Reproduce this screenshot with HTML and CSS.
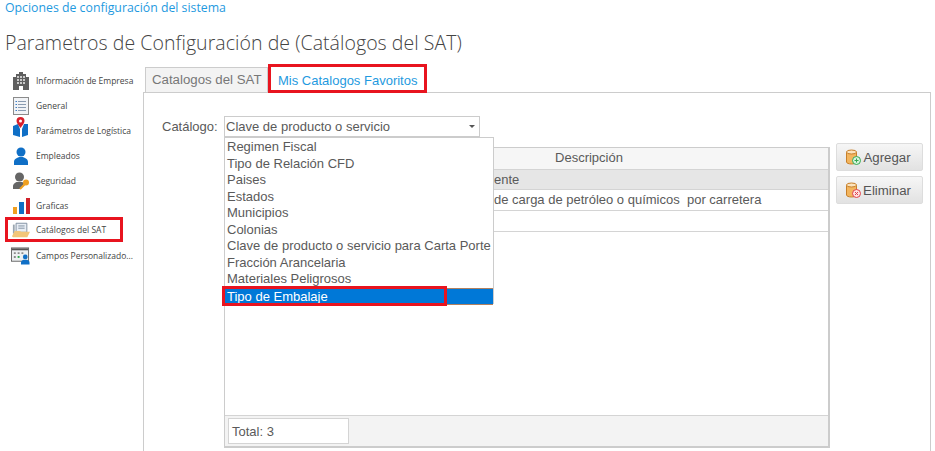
FILE: index.html
```html
<!DOCTYPE html>
<html lang="es">
<head>
  <meta charset="utf-8">
  <title>Parametros de Configuración</title>
  <link rel="stylesheet" href="styles.css">
</head>
<body>
  <header class="top">
    <a class="crumb" href="#">Opciones de configuración del sistema</a>
    <h1>Parametros de Configuración de (Catálogos del SAT)</h1>
  </header>
  <div class="layout">
    <nav class="side">
      <a class="item">
        <svg viewBox="0 0 18 18"><path fill="#5f5f5f" d="M1 5h3V2h3V0h4v2h3v3h3v13H11v-4H7v4H1z"/><path fill="#c9c9c9" d="M5 4h2v2H5zm3 0h2v2H8zm3 0h2v2h-2zM5 7h2v2H5zm3 0h2v2H8zm3 0h2v2h-2zM5 10h2v2H5zm3 0h2v2H8zm3 0h2v2h-2z"/></svg>
        <span>Información de Empresa</span>
      </a>
      <a class="item">
        <svg viewBox="0 0 18 18"><rect x="1.5" y="0.5" width="15" height="17" fill="#f1f3f6" stroke="#8b8b8b"/><path stroke="#8a9bb0" d="M6 4.500h8M6 7.500h8M6 10.500h8M6 13.500h8"/><path stroke="#3f7fc4" d="M3.500 4.500h1.500M3.500 7.500h1.500M3.500 10.500h1.500M3.500 13.500h1.500"/></svg>
        <span>General</span>
      </a>
      <a class="item">
        <svg class="map" viewBox="0 0 18 22"><path fill="#0f6fc6" d="M1 9l5-2 2 5v8l-7-2zM16 7v11l-6 2v-8l2-5z"/><path fill="#d8202c" d="M8.500 0a4 4 0 0 1 4 4c0 2-2 4-4 7-2-3-4-5-4-7a4 4 0 0 1 4-4z"/><circle cx="8.500" cy="4" r="1.500" fill="#fff"/></svg>
        <span>Parámetros de Logística</span>
      </a>
      <a class="item">
        <svg viewBox="0 0 18 18"><circle cx="9" cy="5" r="4.500" fill="#0f6fc6"/><path fill="#0f6fc6" d="M2 18v-3c0-3 3-4 5-5h4c2 1 5 2 5 5v3z"/></svg>
        <span>Empleados</span>
      </a>
      <a class="item">
        <svg viewBox="0 0 18 18"><circle cx="7.500" cy="5" r="4.500" fill="#666"/><path fill="#666" d="M1 17v-3c0-2 3-4 4-4h5c1 0 2 1 2 2l-4 5z"/><circle cx="14" cy="10.500" r="3" fill="#f0a020"/><path stroke="#f0a020" stroke-width="2" d="M12.500 12.500L8 17"/></svg>
        <span>Seguridad</span>
      </a>
      <a class="item">
        <svg viewBox="0 0 18 18"><path fill="#f0a020" d="M1 10h4v7H1z"/><path fill="#0f6fc6" d="M7 5h5v12H7z"/><path fill="#d0212a" d="M14 1h4v16h-4z"/></svg>
        <span>Graficas</span>
      </a>
      <a class="item marked">
        <svg viewBox="0 0 20 18"><path fill="#e8eef5" stroke="#7b8a9c" d="M4.500 1.500h12v10h-12z"/><path stroke="#7b8a9c" d="M7 4.500h7M7 7h7"/><path fill="#9aa5b0" d="M1 3h2v10H1z"/><path fill="#f2c679" d="M0 16l3-6h6l1 1h10l-3 6H1z"/></svg>
        <span>Catálogos del SAT</span>
      </a>
      <a class="item">
        <svg class="wide" viewBox="0 0 20 18"><rect x="0.500" y="0.500" width="18" height="14" fill="#eef0f2" stroke="#666"/><path fill="#555" d="M1 1h17v2H1z"/><path fill="#8a8a8a" d="M3 5h2v2H3zm4 0h2v2H7zm4 0h2v2h-2zm-8 4h2v2H3z"/><path fill="#2ea84a" d="M7 9h2v2H7z"/><circle cx="15" cy="10" r="2.500" fill="#0f6fc6"/><path fill="#0f6fc6" d="M10.500 18v-2c0-2 2-3 3-3h3c1 0 3 1 3 3v2z"/></svg>
        <span>Campos Personalizado...</span>
      </a>
    </nav>
    <main class="main">
      <div class="tabs">
        <a class="tab tab-on">Catalogos del SAT</a>
        <a class="tab tab-fav">Mis Catalogos Favoritos</a>
      </div>
      <div class="panel">
        <div class="field">
          <label>Catálogo:</label>
          <div class="combo">
            <div class="select">Clave de producto o servicio<i class="caret"></i></div>
            <ul class="drop">
              <li>Regimen Fiscal</li>
              <li>Tipo de Relación CFD</li>
              <li>Paises</li>
              <li>Estados</li>
              <li>Municipios</li>
              <li>Colonias</li>
              <li>Clave de producto o servicio para Carta Porte</li>
              <li>Fracción Arancelaria</li>
              <li>Materiales Peligrosos</li>
              <li class="sel">Tipo de Embalaje<b class="mark"></b></li>
            </ul>
          </div>
        </div>
        <div class="work">
          <div class="grid">
            <div class="row head"><div class="c1"></div><div class="c2">Descripción</div></div>
            <div class="row alt"><div class="c1"></div><div class="c2 clip">ente</div></div>
            <div class="row"><div class="c1"></div><div class="c2 clip">de carga de petróleo o químicos&nbsp; por carretera</div></div>
            <div class="row"><div class="c1"></div><div class="c2"></div></div>
            <div class="blank"></div>
            <div class="foot"><div class="total">Total: 3</div></div>
          </div>
          <div class="btns">
            <button>
              <svg viewBox="0 0 16 16"><path fill="#f3b55e" stroke="#c77f2a" d="M1.500 3v10c0 1 2 2 5 2s5-1 5-2V3z"/><ellipse cx="6.500" cy="3" rx="5" ry="2" fill="#fbe3bd" stroke="#c77f2a"/><circle cx="11.500" cy="11.500" r="4" fill="#d6f3dc" stroke="#35a853"/><path stroke="#35a853" d="M9.500 11.500h4M11.500 9.500v4"/></svg>
              Agregar
            </button>
            <button>
              <svg viewBox="0 0 16 16"><path fill="#f3b55e" stroke="#c77f2a" d="M1.500 3v10c0 1 2 2 5 2s5-1 5-2V3z"/><ellipse cx="6.500" cy="3" rx="5" ry="2" fill="#fbe3bd" stroke="#c77f2a"/><circle cx="11.500" cy="11.500" r="4" fill="#fde0e0" stroke="#e0404a"/><path stroke="#e0404a" d="M10 10l3 3M13 10l-3 3"/></svg>
              Eliminar
            </button>
          </div>
        </div>
      </div>
    </main>
  </div>
</body>
</html>
```

FILE: styles.css
```css
html,body{
  height: 100%;
  margin: 0;
  padding: 0;
  overflow: hidden;
  background: #fff;
  color: #5a5a5a;
  font-family: "Liberation Sans", Arial, sans-serif;
  font-size: 13px;
}
a{
  text-decoration: none;
}
.top{
  height: 65px;
  padding-left: 5px;
}
.crumb{
  display: block;
  line-height: 15px;
  font-family: "Open Sans", sans-serif;
  font-size: 12.300px;
  color: #1f9ae0;
}
.top h1{
  margin: 14px 0 0;
  font-family: "Open Sans", sans-serif;
  font-size: 19.500px;
  line-height: 28px;
  font-weight: 300;
  letter-spacing: 0.05px;
  color: #444;
}
.layout{
  display: flex;
  height: 386px;
}
.side{
  width: 143px;
  padding-top: 3px;
  flex: none;
}
.item{
  display: flex;
  align-items: center;
  height: 25px;
  padding-left: 12px;
  color: #444;
  font-family: "Open Sans", sans-serif;
  font-size: 8.500px;
  white-space: nowrap;
}
.item svg{
  width: 18px;
  height: 18px;
  margin-right: 6px;
  flex: none;
}
.item svg.map{
  height: 22px;
  margin-top: -6px;
}
.item svg.wide{
  margin-left: -1px;
  width: 19px;
}
.item.marked{
  margin: -1px 20px 1px 5px;
  padding-left: 7px;
  outline: 3px solid #e8141f;
  outline-offset: -3px;
}
.main{
  flex: 1;
  min-width: 0;
  margin-right: 4px;
}
.tabs{
  display: flex;
  height: 27px;
  padding-left: 2px;
  align-items: flex-end;
}
.tab{
  display: block;
  height: 25px;
  line-height: 24px;
  box-sizing: border-box;
  white-space: nowrap;
}
.tab-on{
  width: 123px;
  padding-left: 6px;
  background: #f3f3f3;
  border: 1px solid #ccc;
  border-bottom: 0;
  color: #777;
  font-size: 13.250px;
}
.tab-fav{
  position: relative;
  height: 29px;
  width: 159px;
  line-height: 27px;
  padding-left: 7px;
  border: 3px solid #e8141f;
  color: #1f9ae0;
  font-size: 13px;
  margin-bottom: -1px;
  background: #fff;
}
.panel{
  height: 359px;
  box-sizing: border-box;
  border: 1px solid #ccc;
  border-bottom: 0;
  padding: 23px 0 0 18px;
}
.field{
  display: flex;
  align-items: center;
  height: 21px;
}
.field label{
  width: 62px;
  font-size: 13px;
}
.combo{
  position: relative;
  width: 256px;
  height: 21px;
}
.select{
  height: 21px;
  box-sizing: border-box;
  border: 1px solid #ccc;
  padding-left: 1px;
  line-height: 19px;
  font-size: 13px;
}
.caret{
  position: absolute;
  right: 5px;
  top: 9px;
  border: 3px solid transparent;
  border-top-color: #555;
}
.drop{
  position: absolute;
  z-index: 2;
  top: 21px;
  left: 0;
  width: 270px;
  height: 167px;
  box-sizing: border-box;
  margin: 0;
  padding: 1px 0 0 2px;
  list-style: none;
  background: #fff;
  border: 1px solid #ccc;
  border-bottom: 0;
}
.drop li{
  height: 16.500px;
  line-height: 16.500px;
  font-size: 13px;
  white-space: nowrap;
}
.drop .sel{
  position: relative;
  height: 15px;
  margin-left: -2px;
  padding-left: 2px;
  background: #0078d7;
  color: #fff;
  border: 1px solid #b08060;
  border-width: 1px 0 1px 0;
}
.mark{
  position: absolute;
  left: -3px;
  top: -3px;
  width: 225px;
  height: 20px;
  box-sizing: border-box;
  border: 3px solid #e8141f;
}
.work{
  display: flex;
  align-items: flex-start;
  margin-left: 62px;
  margin-top: 10px;
}
.grid{
  width: 606px;
  height: 301px;
  box-sizing: border-box;
  display: flex;
  flex-direction: column;
  border: 2px solid #ccc;
  border-width: 1px 2px 2px 1px;
}
.row{
  display: flex;
  height: 20px;
  border-bottom: 1px solid #d4d4d4;
  flex: none;
}
.row.head{
  height: 21px;
  background: #f6f6f6;
  text-align: center;
  font-size: 13px;
}
.row.alt{
  height: 19px;
  background: #e6e6e6;
}
.c1{
  width: 125px;
  flex: none;
}
.c2{
  flex: 1;
  line-height: 20px;
  font-size: 13px;
  white-space: nowrap;
}
.clip{
  padding-left: 144px;
}
.blank{
  flex: 1;
}
.foot{
  height: 31px;
  box-sizing: border-box;
  padding: 2px 3px;
  border-top: 1px solid #d4d4d4;
  background: #f3f3f3;
}
.total{
  width: 121px;
  height: 26px;
  box-sizing: border-box;
  border: 1px solid #d4d4d4;
  background: #fff;
  padding-left: 3px;
  line-height: 26px;
  font-size: 13px;
}
.btns{
  display: flex;
  flex-direction: column;
  gap: 5px;
  margin-left: 6px;
  margin-top: -4px;
}
.btns button{
  display: flex;
  align-items: center;
  justify-content: center;
  gap: 2px;
  width: 87px;
  height: 28px;
  padding: 0 3px 0 0;
  border: 1px solid #ddd;
  border-radius: 2px;
  background: linear-gradient(#f6f6f6, #e2e2e2);
  color: #555;
  font-family: "Liberation Sans", Arial, sans-serif;
  font-size: 13.250px;
}
.btns svg{
  width: 16px;
  height: 16px;
}
```
